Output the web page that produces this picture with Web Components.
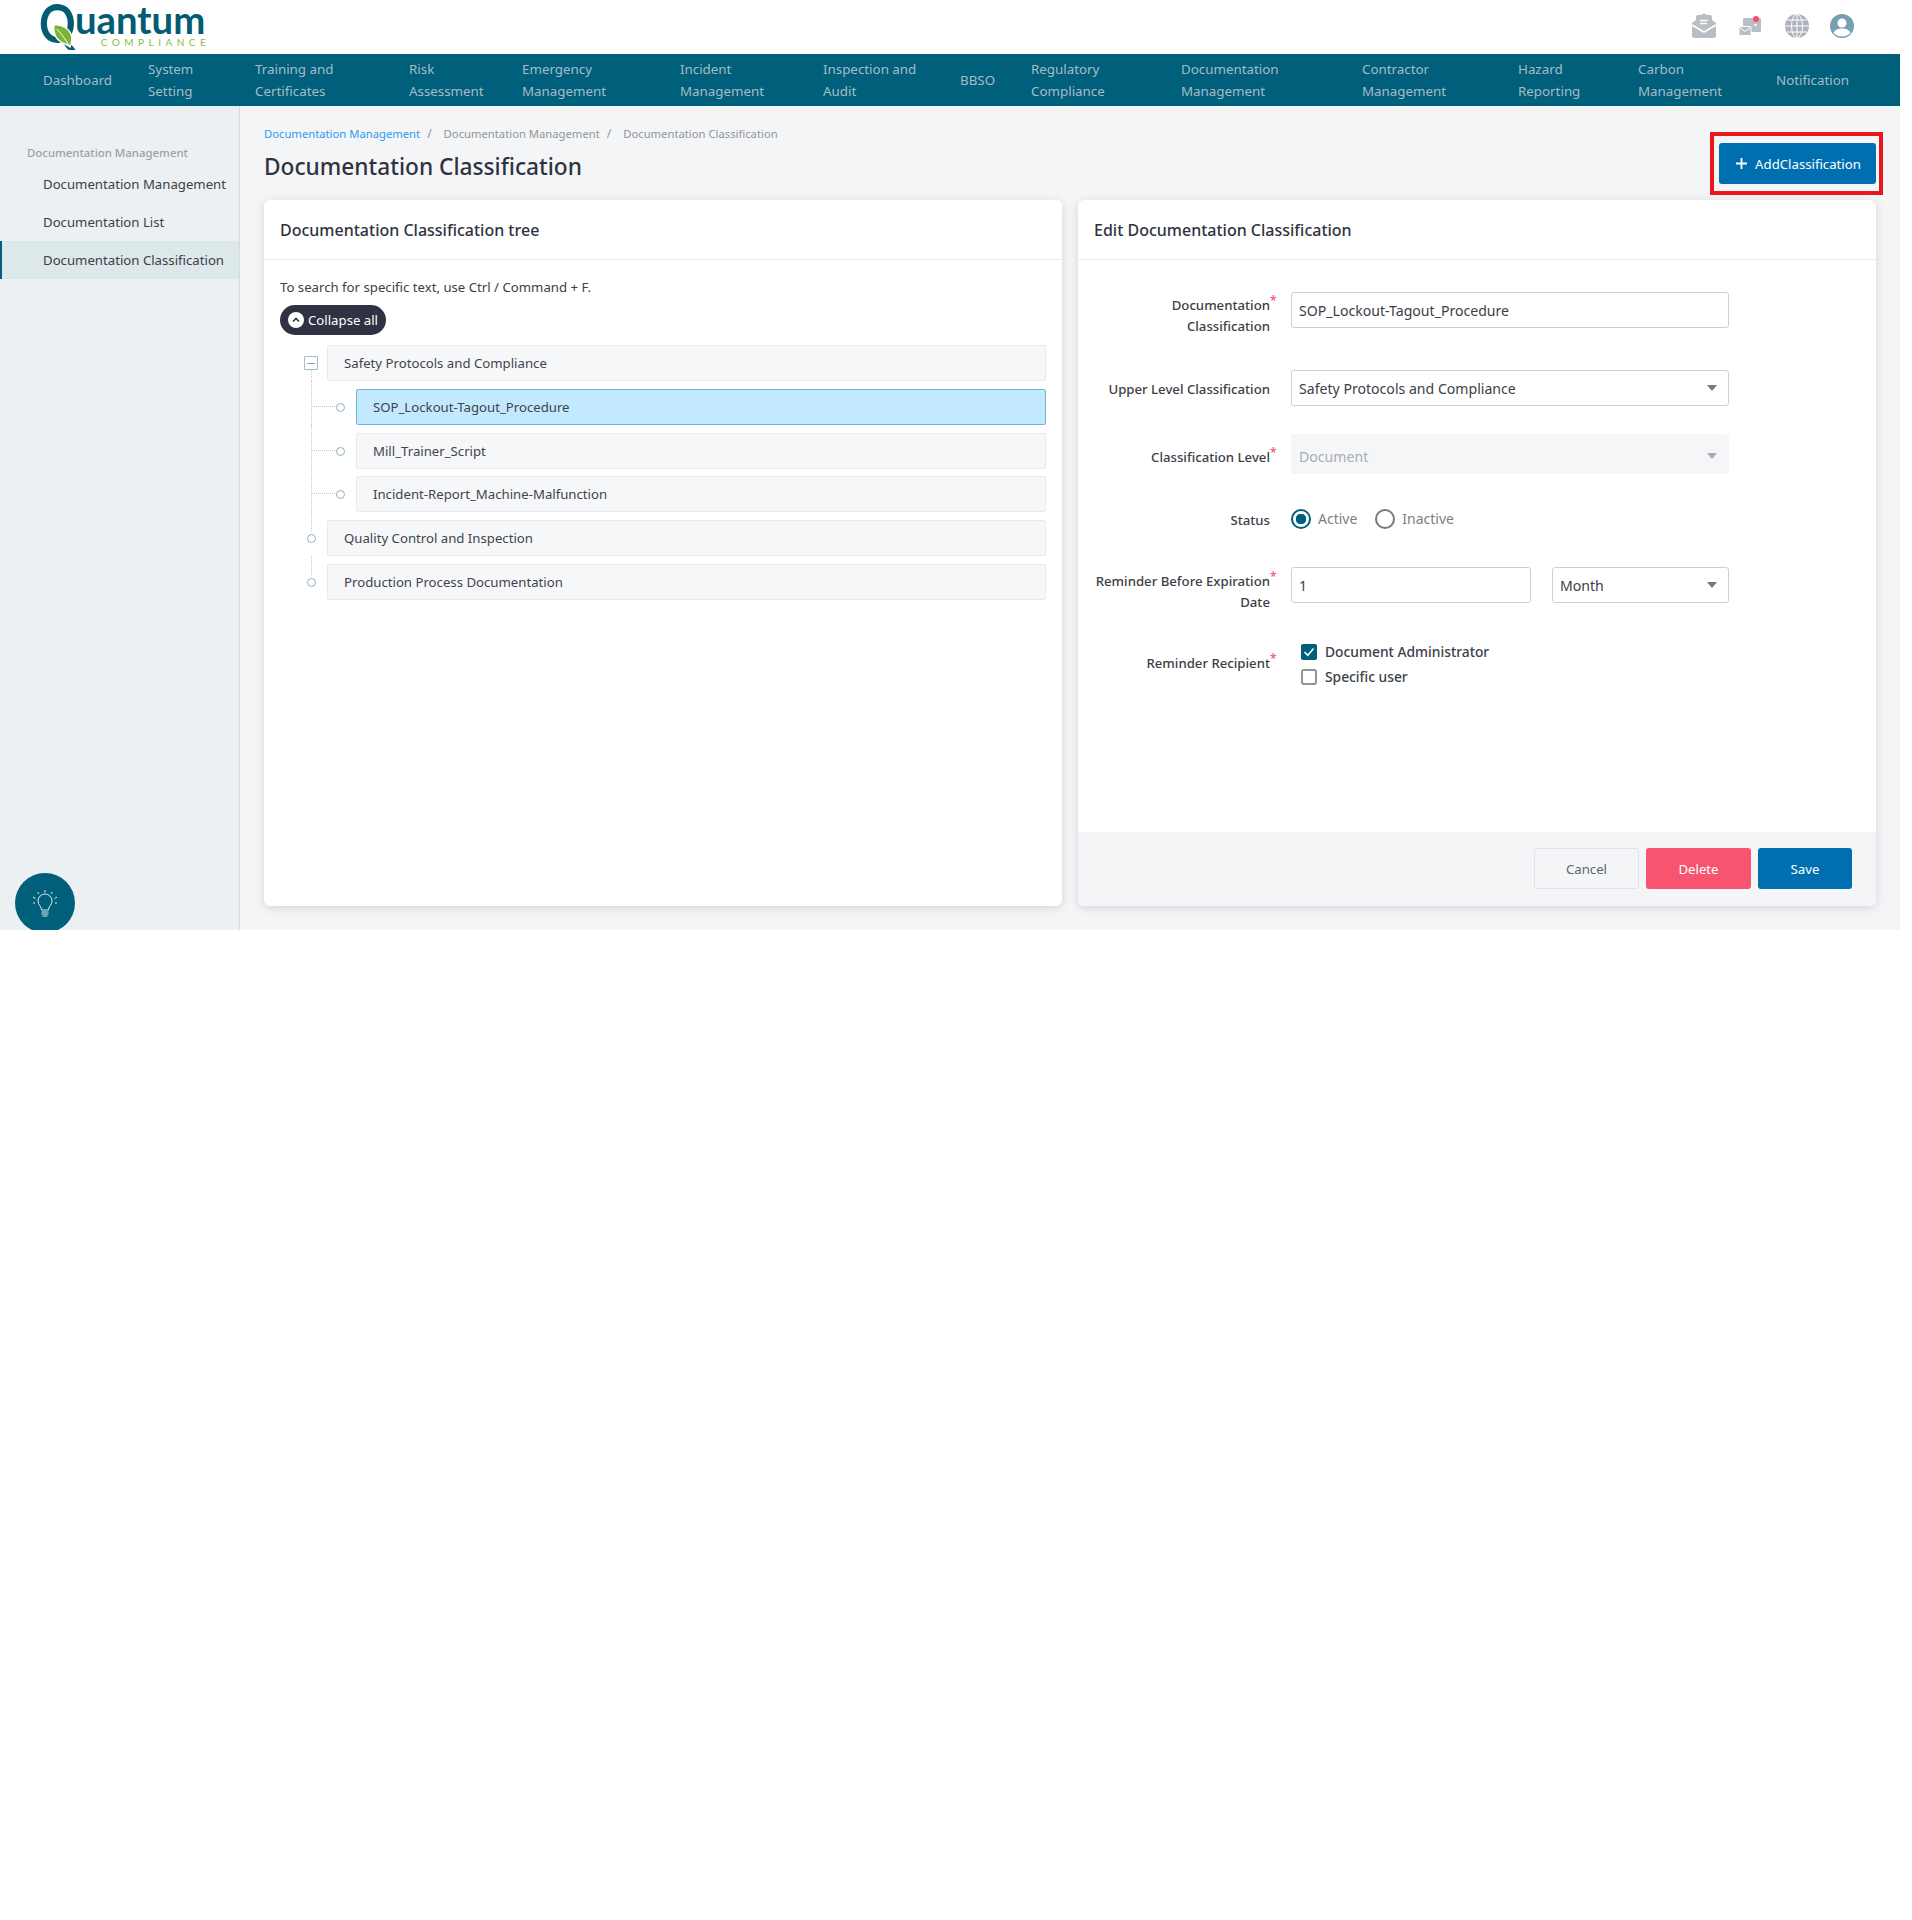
<!DOCTYPE html>
<html>
<head>
<meta charset="utf-8">
<title>Documentation Classification</title>
<style>
    html, body { margin: 0; background: #fff; }
    body { font-family: "Noto Sans", "Open Sans", sans-serif; font-size: 13.2px; color: #3c4048; }
</style>
</head>
<body>
<app-shell>
    <top-bar></top-bar>
    <main-nav>
        <nav-item>Dashboard</nav-item>
        <nav-item>System<br>Setting</nav-item>
        <nav-item>Training and<br>Certificates</nav-item>
        <nav-item>Risk<br>Assessment</nav-item>
        <nav-item>Emergency<br>Management</nav-item>
        <nav-item>Incident<br>Management</nav-item>
        <nav-item>Inspection and<br>Audit</nav-item>
        <nav-item>BBSO</nav-item>
        <nav-item>Regulatory<br>Compliance</nav-item>
        <nav-item>Documentation<br>Management</nav-item>
        <nav-item>Contractor<br>Management</nav-item>
        <nav-item>Hazard<br>Reporting</nav-item>
        <nav-item>Carbon<br>Management</nav-item>
        <nav-item>Notification</nav-item>
    </main-nav>
    <page-body>
        <side-bar slot="side" heading="Documentation Management">
            <side-link>Documentation Management</side-link>
            <side-link>Documentation List</side-link>
            <side-link active>Documentation Classification</side-link>
        </side-bar>
        <page-head>
            <bread-crumb>
                <crumb-item link>Documentation Management</crumb-item>
                <crumb-item>Documentation Management</crumb-item>
                <crumb-item last>Documentation Classification</crumb-item>
            </bread-crumb>
            <span slot="title">Documentation Classification</span>
            <red-frame slot="action"><ui-button kind="primary" wide><plus-mark></plus-mark>AddClassification</ui-button></red-frame>
        </page-head>
        <two-cols>
            <ui-card heading="Documentation Classification tree">
                <tree-panel>
                    <tree-node toggle first>Safety Protocols and Compliance</tree-node>
                    <tree-node child selected>SOP_Lockout-Tagout_Procedure</tree-node>
                    <tree-node child>Mill_Trainer_Script</tree-node>
                    <tree-node child style="margin-top:-1px">Incident-Report_Machine-Malfunction</tree-node>
                    <tree-node>Quality Control and Inspection</tree-node>
                    <tree-node>Production Process Documentation</tree-node>
                </tree-panel>
            </ui-card>
            <ui-card heading="Edit Documentation Classification">
                <form-row style="--row-h:45px;--label-top:3px;margin-bottom:33px">
                    <span slot="label">Documentation<req-mark></req-mark><br>Classification</span>
                    <text-box>SOP_Lockout-Tagout_Procedure</text-box>
                </form-row>
                <form-row style="--row-h:36px;--label-top:9px;margin-bottom:28px">
                    <span slot="label">Upper Level Classification</span>
                    <text-box select>Safety Protocols and Compliance</text-box>
                </form-row>
                <form-row style="--row-h:40px;--label-top:13px;margin-bottom:30px">
                    <span slot="label">Classification Level<req-mark></req-mark></span>
                    <text-box select disabled>Document</text-box>
                </form-row>
                <form-row style="--row-h:30px;--label-top:6px;margin-bottom:33px">
                    <span slot="label">Status</span>
                    <radio-set>
                        <radio-opt checked>Active</radio-opt>
                        <radio-opt>Inactive</radio-opt>
                    </radio-set>
                </form-row>
                <form-row style="--row-h:45px;--label-top:4px;margin-bottom:28px">
                    <span slot="label">Reminder Before Expiration<req-mark></req-mark><br>Date</span>
                    <split-field>
                        <text-box>1</text-box>
                        <text-box select>Month</text-box>
                    </split-field>
                </form-row>
                <form-row style="--row-h:50px;--label-top:13px">
                    <span slot="label">Reminder Recipient<req-mark></req-mark></span>
                    <check-list>
                        <check-opt checked>Document Administrator</check-opt>
                        <check-opt>Specific user</check-opt>
                    </check-list>
                </form-row>
                <ui-button slot="footer" kind="plain" style="width:105px">Cancel</ui-button>
                <ui-button slot="footer" kind="danger" style="width:105px">Delete</ui-button>
                <ui-button slot="footer" kind="primary" style="width:94px">Save</ui-button>
            </ui-card>
        </two-cols>
    </page-body>
</app-shell>

<script>
// small helper: every element is a template + an open shadow root
function defineEl(name, html, extra) {
    const tpl = document.createElement('template');
    tpl.innerHTML = html;
    class El extends HTMLElement {
        constructor() {
            super();
            this.attachShadow({ mode: 'open' }).appendChild(tpl.content.cloneNode(true));
        }
        connectedCallback() {
            if (extra) extra.call(this, this.shadowRoot);
        }
    }
    customElements.define(name, El);
}

const TEAL = '#005f7a';

defineEl('app-shell', `
<style>
    :host { display: block; width: 1900px; height: 930px; overflow: hidden; background: #f4f5f7; }
</style>
<slot></slot>`);

defineEl('top-bar', `
<style>
    :host { display: flex; align-items: center; justify-content: space-between; height: 54px; box-sizing: border-box; background: #fff; padding: 0 46px 2px 39px; }
    .logo { display: flex; align-items: flex-start; position: relative; height: 52px; font-family: Lato, "Noto Sans", sans-serif; color: #045c72; }
    .qbox { width: 36px; height: 52px; }
    .q { display: inline-block; font-size: 54px; line-height: 46px; font-weight: 700; transform: scaleX(.84); transform-origin: left top; }
    .leaf { position: absolute; left: 13px; top: 24px; }
    .words { display: flex; flex-direction: column; align-items: flex-end; }
    .name { font-size: 38.300px; font-weight: 700; line-height: 30px; margin-top: 4px; }
    .sub { font-size: 10px; line-height: 10px; letter-spacing: 4.500px; margin-right: -5px; color: #8dbb3e; margin-top: 3px; }
    .icons { display: flex; align-items: center; gap: 22px; }
    .globe { margin: 0 -1px 0 1px; }
    svg { display: block; }
</style>
<div class="logo">
    <div class="qbox"><span class="q">Q</span></div>
    <svg class="leaf" width="22" height="24" viewBox="0 0 22 24">
        <path d="M2 1 C10 0 19 5 20 14 C20 18 19 21 18 23 C15 20 12 20 9 18 C3 14 1 8 2 1Z" fill="#7fb335" stroke="#fff" stroke-width="1.500"/>
        <path d="M5 5 C9 10 13 14 18 23" stroke="#fff" stroke-width="1" fill="none"/>
    </svg>
    <div class="words">
        <span class="name">uantum</span>
        <span class="sub">COMPLIANCE</span>
    </div>
</div>
<div class="icons">
    <svg width="24" height="24" viewBox="0 0 24 24">
        <path d="M0 9 L4 6 L4 3 Q4 1 6 1 L9 1 L12 -1 L15 1 L18 1 Q20 1 20 3 L20 6 L24 9 L24 22 Q24 24 22 24 L2 24 Q0 24 0 22Z" fill="#b9bec5"/>
        <path d="M8 6.500H16M8 9.500H15" stroke="#fff" stroke-width="1.500"/>
        <path d="M0 11 L12 18 L24 11" stroke="#fff" stroke-width="1.600" fill="none"/>
    </svg>
    <svg width="24" height="24" viewBox="0 0 24 24">
        <rect x="5" y="4" width="18" height="14" rx="1.500" fill="#b9bec5"/>
        <rect x="1" y="12.500" width="12" height="9" rx="1" fill="#b9bec5" stroke="#fff"/>
        <path d="M1.500 13.500 L7 17.500 L12.500 13.500" stroke="#fff" fill="none"/>
        <circle cx="17.500" cy="11" r="1.200" fill="#fff"/>
        <circle cx="18" cy="5" r="3" fill="#f5506e"/>
    </svg>
    <svg class="globe" width="24" height="24" viewBox="0 0 24 24">
        <circle cx="12" cy="12" r="12" fill="#adb3bb"/>
        <g stroke="#fff" stroke-width="1" fill="none">
            <ellipse cx="12" cy="12" rx="5.500" ry="12"/>
            <path d="M12 0V24M0 12H24M2 6H22M2 18H22"/>
        </g>
    </svg>
    <svg width="24" height="24" viewBox="0 0 24 24">
        <circle cx="12" cy="12" r="12" fill="#779fb3"/>
        <circle cx="12" cy="9" r="4.500" fill="#fff"/>
        <path d="M3.500 19 C5 15.500 8 14.500 12 14.500 C16 14.500 19 15.500 20.500 19 C18 21.500 15 22.500 12 22.500 C9 22.500 6 21.500 3.500 19Z" fill="#fff"/>
    </svg>
</div>`);

defineEl('main-nav', `
<style>
    :host { display: grid; grid-template-columns: 105px 107px 154px 113px 158px 143px 137px 71px 150px 181px 156px 120px 138px auto; align-items: center; height: 52px; padding-left: 43px; background: ${TEAL}; }
</style>
<slot></slot>`);

defineEl('nav-item', `
<style>
    :host { display: block; color: #a5bcc6; font-size: 13.350px; line-height: 22px; white-space: nowrap; }
</style>
<slot></slot>`);

defineEl('page-body', `
<style>
    :host { display: grid; grid-template-columns: 240px 1fr; height: 824px; }
    main { padding: 18px 24px 0; min-width: 0; }
</style>
<slot name="side"></slot>
<main><slot></slot></main>`);

defineEl('side-bar', `
<style>
    :host { display: block; position: relative; overflow: hidden; background: #ecf0f3; border-right: 1px solid #d5dbe0; padding-top: 38px; }
    .head { padding-left: 27px; font-size: 11.400px; line-height: 18px; font-weight: 500; color: #9ba1a8; margin-bottom: 3px; }
    .bulb { position: absolute; left: 15px; bottom: -3px; width: 60px; height: 60px; border-radius: 50%; background: ${TEAL}; display: flex; align-items: center; justify-content: center; }
</style>
<div class="head"></div>
<slot></slot>
<div class="bulb">
    <svg width="24" height="27" viewBox="0 0 24 27" fill="none" stroke="#dfe9ec" stroke-width="1">
        <path d="M8.500 20 C8.500 16 5 15 5 11 A7 7 0 0 1 19 11 C19 15 15.500 16 15.500 20Z"/>
        <path d="M8.500 22H15.500M8.500 24H15.500M9.500 26H14.500"/>
        <path d="M12 0V2.500M4.500 2L6 4M19.500 2L18 4M0 7L2.500 8.500M24 7L21.500 8.500M0 13H2M22 13H24"/>
    </svg>
</div>`, function (root) {
    root.querySelector('.head').textContent = this.getAttribute('heading');
});

defineEl('side-link', `
<style>
    :host { display: block; height: 38px; line-height: 38px; padding-left: 43px; color: #3c4048; font-size: 13.2px; white-space: nowrap; }
    :host([active]) { background: #dde8eb; box-shadow: inset 2px 0 0 ${TEAL}; }
</style>
<slot></slot>`);

defineEl('page-head', `
<style>
    :host { display: flex; justify-content: space-between; align-items: flex-end; height: 61px; margin-bottom: 15px; }
    .title { font-size: 22.700px; line-height: 36px; margin-top: 6px; color: #2f3341; font-weight: 500; white-space: nowrap; }
    .action { margin-bottom: 1px; }
</style>
<div>
    <slot></slot>
    <div class="title"><slot name="title"></slot></div>
</div>
<div class="action"><slot name="action"></slot></div>`);

defineEl('bread-crumb', `
<style>
    :host { display: flex; font-size: 11.250px; line-height: 18px; white-space: nowrap; }
</style>
<slot></slot>`);

defineEl('crumb-item', `
<style>
    :host { color: #90959c; }
    :host([link]) { color: #2f9bee; }
    .sep { color: #90959c; margin: 0 12px 0 7px; font-size: 12px; }
    :host([last]) .sep { display: none; }
</style>
<slot></slot><span class="sep">/</span>`);

defineEl('red-frame', `
<style>
    :host { display: block; position: relative; }
    .frame { position: absolute; inset: -11px -7px -11px -9px; border: 4px solid #e8171c; pointer-events: none; }
</style>
<slot></slot>
<div class="frame"></div>`);

defineEl('plus-mark', `
<style>
    :host { display: block; width: 11px; height: 11px; margin-right: 8px; }
    svg { display: block; }
</style>
<svg width="11" height="11" viewBox="0 0 11 11"><path d="M5.500 0V11M0 5.500H11" stroke="#fff" stroke-width="1.800"/></svg>`);

defineEl('ui-button', `
<style>
    :host { display: flex; align-items: center; justify-content: center; height: 41px; box-sizing: border-box; border-radius: 3px; font-size: 13.2px; white-space: nowrap; color: #fff; }
    :host([kind=primary]) { background: #006fb0; }
    :host([kind=danger]) { background: #f7546f; }
    :host([kind=plain]) { background: #f4f5f7; color: #5f6570; border: 1px solid #dfe3e8; }
    :host([wide]) { width: 157px; box-sizing: border-box; padding-left: 2px; }
</style>
<slot></slot>`);

defineEl('two-cols', `
<style>
    :host { display: grid; grid-template-columns: 798px 798px; gap: 16px; height: 706px; }
</style>
<slot></slot>`);

defineEl('ui-card', `
<style>
    :host { display: flex; flex-direction: column; background: #fff; border-radius: 6px; box-shadow: 0 2px 8px rgba(40,50,60,.16); overflow: hidden; }
    .head { height: 59px; line-height: 60px; padding-left: 16px; font-size: 16px; font-weight: 500; color: #2f3341; border-bottom: 1px solid #e8eaed; flex: none; }
    .body { flex: 1; min-height: 0; }
    .foot { display: none; justify-content: flex-end; gap: 7px; height: 74px; box-sizing: border-box; padding: 16px 24px 0 0; background: #f4f5f7; flex: none; }
    .foot.on { display: flex; }
    .body.form { padding-top: 32px; }
</style>
<div class="head"></div>
<div class="body"><slot></slot></div>
<div class="foot"><slot name="footer"></slot></div>`, function (root) {
    root.querySelector('.head').textContent = this.getAttribute('heading');
    if (this.querySelector('[slot=footer]')) {
        root.querySelector('.foot').classList.add('on');
        root.querySelector('.body').classList.add('form');
    }
});

defineEl('tree-panel', `
<style>
    :host { display: block; padding: 17px 16px 0; }
    .hint { font-size: 13.2px; line-height: 21px; color: #3c4048; }
    .pill { display: inline-flex; align-items: center; gap: 4px; height: 30px; padding: 0 8px; border-radius: 15px; background: #2e3243; color: #fff; margin-top: 7px; font-size: 13.2px; }
    .tree { display: grid; gap: 8px; margin-top: 10px; }
    svg { display: block; }
</style>
<div class="hint">To search for specific text, use Ctrl / Command + F.</div>
<div class="pill">
    <svg width="16" height="16" viewBox="0 0 16 16"><circle cx="8" cy="8" r="8" fill="#fff"/><path d="M5 9.500 L8 6.500 L11 9.500" stroke="#2e3243" stroke-width="1.600" fill="none"/></svg>
    <span>Collapse all</span>
</div>
<div class="tree"><slot></slot></div>`);

defineEl('tree-node', `
<style>
    :host { display: flex; position: relative; align-items: center; height: 36px; padding-left: 24px; }
    :host([child]) { padding-left: 56px; }
    .mark { flex: none; width: 14px; height: 14px; margin-right: 9px; box-sizing: border-box; display: flex; align-items: center; justify-content: center; position: relative; z-index: 1; }
    .dot { width: 9px; height: 9px; box-sizing: border-box; border: 1px solid #8fb0c0; border-radius: 50%; background: #fff; }
    .sq { width: 14px; height: 14px; box-sizing: border-box; border: 1px solid #9fbccb; border-radius: 1px; display: flex; align-items: center; justify-content: center; background: #fff; }
    .sq::after { content: ""; width: 8px; height: 1px; background: #7d9fb0; }
    .row { flex: 1; height: 36px; line-height: 34px; box-sizing: border-box; padding-left: 16px; border: 1px solid #e7e9ec; border-radius: 2px; background: #f6f7f9; color: #3f444c; font-size: 13.2px; white-space: nowrap; }
    :host([selected]) .row { background: #c2e9fd; border-color: #6fb5d8; }
    /* connector lines, each one covers its row and the gap above it */
    .v { position: absolute; left: 31px; top: -8px; bottom: 0; border-left: 1px dotted #c2cad0; }
    :host([first]) .v { top: 25px; bottom: 0; }
    :host(:not([child]):not([first])) .v { bottom: auto; height: 19px; }
    .h { display: none; position: absolute; left: 32px; width: 23px; top: 17px; border-top: 1px dotted #c2cad0; }
    :host([child]) .h { display: block; }
    :host([child]) .mark { width: 9px; margin-right: 11px; }
</style>
<div class="v"></div>
<div class="h"></div>
<div class="mark"><div class="ic"></div></div>
<div class="row"><slot></slot></div>`, function (root) {
    root.querySelector('.ic').className = this.hasAttribute('toggle') ? 'sq' : 'dot';
});

defineEl('form-row', `
<style>
    :host { display: grid; grid-template-columns: 192px 438px; column-gap: 21px; height: var(--row-h); }
    .label { padding-top: var(--label-top); text-align: right; font-size: 13.2px; line-height: 21px; font-weight: 500; color: #3c4048; white-space: nowrap; }
</style>
<div class="label"><slot name="label"></slot></div>
<div><slot></slot></div>`);

defineEl('req-mark', `
<style>
    :host { display: inline-block; width: 0; color: #f5506e; font-size: 12px; line-height: 0; vertical-align: 5px; }
</style>
*`);

defineEl('text-box', `
<style>
    :host { display: flex; align-items: center; justify-content: space-between; height: 36px; box-sizing: border-box; padding: 0 11px 0 7px; background: #fff; border: 1px solid #ccd0d5; border-radius: 3px; font-size: 14.100px; color: #3c4048; white-space: nowrap; }
    :host([disabled]) { height: 40px; padding-top: 4px; background: #f5f6f8; border-color: #f5f6f8; color: #a8adb3; }
    .arrow { display: none; width: 0; height: 0; border: 5px solid transparent; border-top: 6px solid #6e7a85; border-bottom: 0; }
    :host([select]) .arrow { display: block; }
    :host([disabled]) .arrow { border-top-color: #a8adb3; }
</style>
<span><slot></slot></span>
<span class="arrow"></span>`);

defineEl('split-field', `
<style>
    :host { display: grid; grid-template-columns: 240px 177px; column-gap: 21px; }
</style>
<slot></slot>`);

defineEl('radio-set', `
<style>
    :host { display: flex; align-items: center; gap: 18px; height: 30px; }
</style>
<slot></slot>`);

defineEl('radio-opt', `
<style>
    :host { display: flex; align-items: center; gap: 7px; color: #7a7f86; font-size: 14px; }
    .c { width: 20px; height: 20px; box-sizing: border-box; border: 2px solid #77797d; border-radius: 50%; background: #fff; }
    .t { padding-bottom: 2px; }
    :host([checked]) .c { border-color: ${TEAL}; background: radial-gradient(circle, ${TEAL} 5px, #fff 5.500px); }
</style>
<span class="c"></span><span class="t"><slot></slot></span>`);

defineEl('check-list', `
<style>
    :host { display: grid; gap: 4px; padding: 1px 0 0 10px; }
</style>
<slot></slot>`);

defineEl('check-opt', `
<style>
    :host { display: flex; align-items: center; gap: 8px; height: 21px; font-size: 13.800px; font-weight: 500; color: #3c4048; }
    svg { display: block; }
    .off { display: block; }
    .on { display: none; }
    :host([checked]) .off { display: none; }
    :host([checked]) .on { display: block; }
</style>
<svg class="on" width="16" height="16" viewBox="0 0 16 16"><rect width="16" height="16" rx="2" fill="${TEAL}"/><path d="M3.500 8 L6.800 11.300 L12.500 4.500" stroke="#fff" stroke-width="1.500" fill="none"/></svg>
<svg class="off" width="16" height="16" viewBox="0 0 16 16"><rect x="1" y="1" width="14" height="14" rx="1.500" fill="#fff" stroke="#6f7378" stroke-width="1.500"/></svg>
<span><slot></slot></span>`);
</script>
</body>
</html>
